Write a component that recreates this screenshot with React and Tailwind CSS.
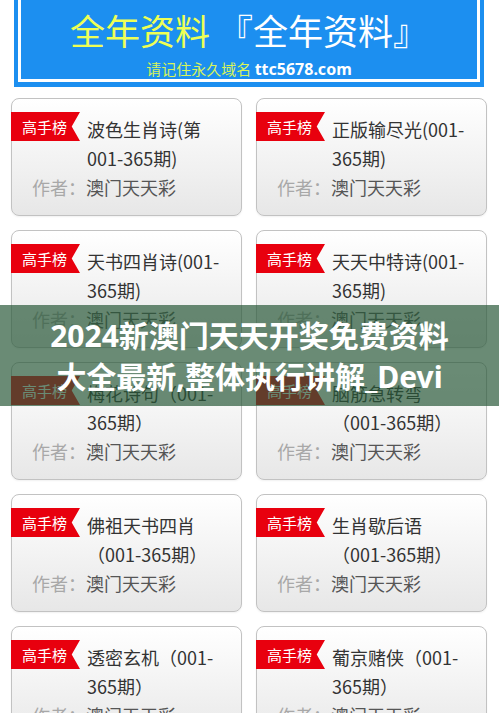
import React from "react";

const cards = [
  ["波色生肖诗(第001-365期)", "正版输尽光(001-365期)"],
  ["天书四肖诗(001-365期)", "天天中特诗(001-365期)"],
  ["梅花诗句（001-365期）", "脑筋急转弯（001-365期）"],
  ["佛祖天书四肖（001-365期）", "生肖歇后语（001-365期）"],
  ["透密玄机（001-365期）", "葡京赌侠（001-365期）"],
];

function Card({ title }) {
  return (
    <div className="h-[118px] rounded-[8px] border border-[#c2c2c2] bg-gradient-to-b from-white to-[#e7e7e7] pt-[13px] shadow-[0_1px_2px_rgba(0,0,0,0.06)]">
      <div className="flex items-start">
        <div className="-ml-px flex h-[29px] w-[69px] shrink-0 items-center bg-[#e8000e] pl-[11px] text-[15px] leading-[29px] text-white [clip-path:polygon(0_0,100%_0,88%_50%,100%_100%,0_100%)]">
          高手榜
        </div>
        <div className="ml-[7px] mt-[3px] w-[138px] text-[18px] leading-[29px] text-[#333]">
          {title}
        </div>
      </div>
      <div className="pl-[20px] text-[18px] leading-[29px]">
        <span className="text-[#a8a8a8]">作者：</span>
        <span className="text-[#555]">澳门天天彩</span>
      </div>
    </div>
  );
}

export default function App() {
  return (
    <div className="relative h-[713px] w-[499px] overflow-hidden bg-white font-['Noto_Sans_CJK_SC',sans-serif]">
      <div className="ml-[14px] w-[470px] bg-[#1c8ff0] px-[4px] pb-[5px]">
        <div className="flex flex-col items-center border-[3px] border-t-0 border-white pt-[10px]">
          <div className="whitespace-nowrap text-[35px] leading-[40px]">
            <span className="text-[#eeff55]">全年资料</span>
            <span className="text-white"> 『全年资料』</span>
          </div>
          <div className="mt-[9px] whitespace-nowrap text-[15px] leading-[20px]">
            <span className="text-[#d8f35a]">请记住永久域名 </span>
            <span className="font-['Noto_Sans',sans-serif] text-[16px] font-bold text-white">ttc5678.com</span>
          </div>
        </div>
      </div>

      <div className="mt-[11px] grid grid-cols-2 gap-[14px] pl-[11px] pr-[12px]">
        {cards.map((row, i) => (
          <React.Fragment key={i}>
            <Card title={row[0]} />
            <Card title={row[1]} />
          </React.Fragment>
        ))}
      </div>

      <div className="absolute left-0 right-0 top-[305px] h-[101px] bg-[rgba(39,87,55,0.69)] pt-[10px] text-center font-['Noto_Sans','Noto_Sans_CJK_SC',sans-serif] text-[30px] font-bold leading-[41px] text-white">
        <div className="whitespace-nowrap">2024新澳门天天开奖免费资料</div>
        <div className="whitespace-nowrap">大全最新,整体执行讲解_Devi</div>
      </div>
    </div>
  );
}
